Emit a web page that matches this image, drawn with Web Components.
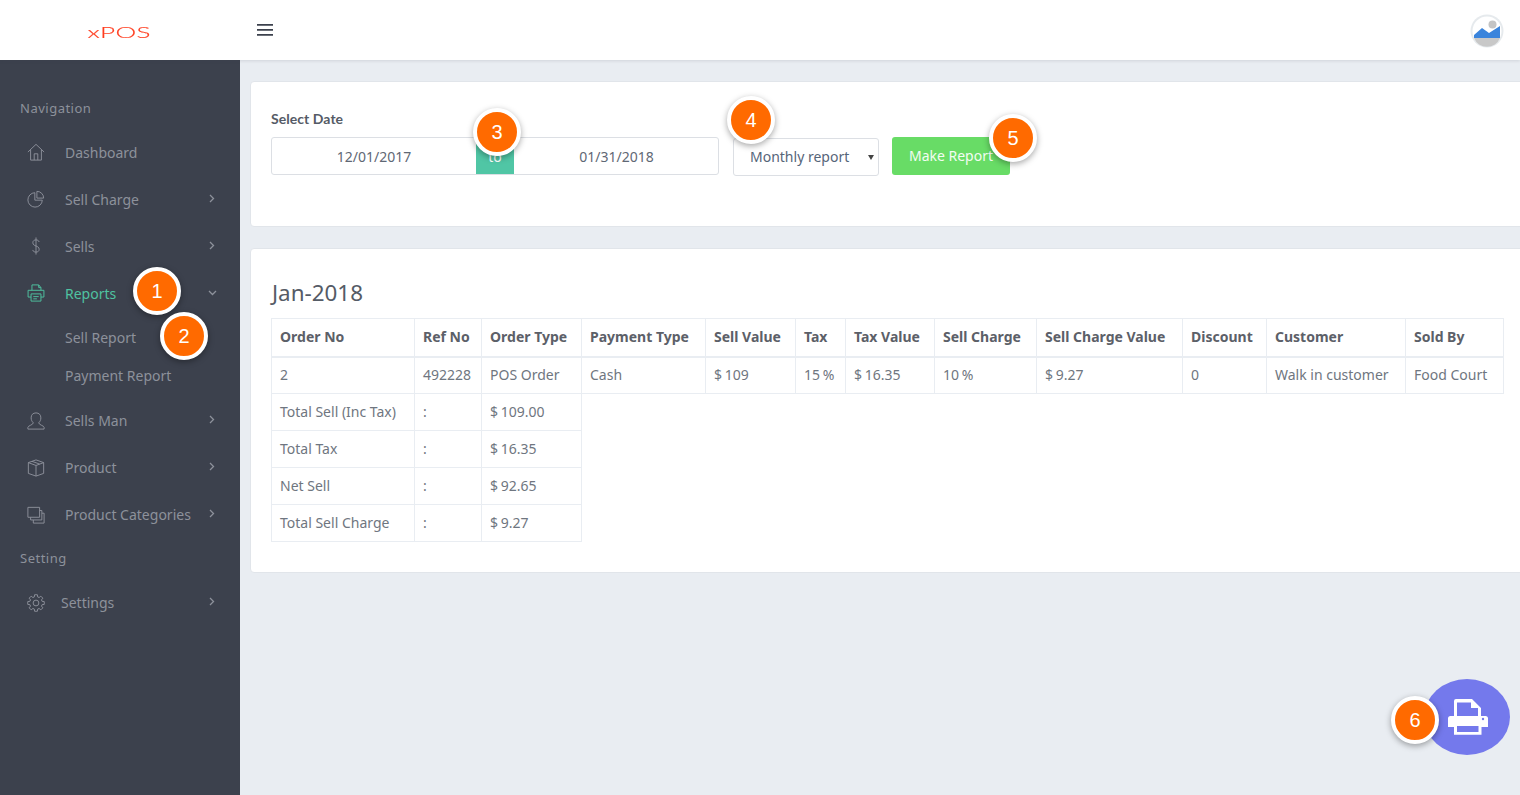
<!DOCTYPE html>
<html lang="en">
<head>
<meta charset="utf-8">
<title>xPOS</title>
<style>
  html, body { margin: 0; height: 100%; overflow: hidden; }
  body { font-family: "Noto Sans", "Liberation Sans", sans-serif; background: #e9edf2; }
</style>
</head>
<body>
<pos-app>
  <pos-header slot="header"></pos-header>
  <pos-sidebar slot="sidebar">
    <pos-nav-label style="margin-bottom:10.5px">Navigation</pos-nav-label>
    <pos-nav-item icon="home">Dashboard</pos-nav-item>
    <pos-nav-item icon="pie" arrow="right">Sell Charge</pos-nav-item>
    <pos-nav-item icon="dollar" arrow="right">Sells</pos-nav-item>
    <pos-nav-item icon="printer" arrow="down" active>Reports</pos-nav-item>
    <pos-nav-sub style="margin-top:2px">Sell Report</pos-nav-sub>
    <pos-nav-sub>Payment Report</pos-nav-sub>
    <pos-nav-item icon="user" arrow="right" style="margin-top:2.5px">Sells Man</pos-nav-item>
    <pos-nav-item icon="box" arrow="right">Product</pos-nav-item>
    <pos-nav-item icon="layers" arrow="right">Product Categories</pos-nav-item>
    <pos-nav-label style="margin:9.5px 0 11.5px">Setting</pos-nav-label>
    <pos-nav-item icon="gear" arrow="right" tight>Settings</pos-nav-item>
  </pos-sidebar>
  <pos-card style="height:146px">
    <report-form></report-form>
  </pos-card>
  <pos-card style="height:325px;margin-top:21px">
    <report-table></report-table>
  </pos-card>
  <print-fab slot="overlay"></print-fab>
  <step-badge slot="overlay" x="157" y="291">1</step-badge>
  <step-badge slot="overlay" x="184" y="336">2</step-badge>
  <step-badge slot="overlay" x="497" y="132">3</step-badge>
  <step-badge slot="overlay" x="751" y="120">4</step-badge>
  <step-badge slot="overlay" x="1013" y="138">5</step-badge>
  <step-badge slot="overlay" x="1415" y="720">6</step-badge>
</pos-app>

<script>
'use strict';

// gear outline, 8 teeth
function gearPath() {
  const pts = [];
  for (let i = 0; i < 8; i++) {
    const a = i * Math.PI / 4;
    [[-.27, 7], [-.17, 9.3], [.17, 9.3], [.27, 7]].forEach(([d, r]) => {
      pts.push((10 + r * Math.sin(a + d)).toFixed(2) + ' ' + (10 - r * Math.cos(a + d)).toFixed(2));
    });
  }
  return 'M' + pts.join('L') + 'z';
}

const ICONS = {
  home: '<path d="M1 10 10 1.500 19 10M4 7.500V19h12V7.500M8 19v-7h4v7"/>',
  pie: '<path d="M8.700 3a8 8 0 1 0 8.300 8.300H8.700z"/><path d="M11 1.500a7.500 7.500 0 0 1 7.500 7.500H11z"/>',
  dollar: '<path d="M13.500 5.500C13 3.900 11.700 3.200 10 3.200c-2 0-3.500 1.100-3.500 3.100 0 4.700 7 2.700 7 7.400 0 2-1.500 3.100-3.500 3.100-1.800 0-3.200-.8-3.700-2.400M10 .5v19"/>',
  printer: '<path d="M5.500 7V1h7.500l2.500 3V7M13 1v3h2.500M4.500 14.500h-3.300V7h17.600v7.500h-3.300"/><path d="M4.500 11h11v8h-11zM7 14h6M7 16.500h4"/>',
  user: '<path d="M1 19v-2c0-1.700 6-2.800 6-5-1.500-1.300-2.400-3.200-2.400-5.500C4.600 3 6.700 1 10 1s5.400 2 5.400 5.500c0 2.300-.9 4.200-2.400 5.500 0 2.200 6 3.300 6 5v2z"/>',
  box: '<path d="M10 1 18.500 4v12L10 19 1.500 16V4zM1.500 4l8.500 3.200L18.500 4M10 7.200V19M5.500 2.600l8.500 3"/>',
  layers: '<path d="M1 1.500h13v11H1z"/><path d="M14 5h2.500v10.500H4V12.500M16.500 8H19v11H7v-3.500"/>',
  gear: `<circle cx="10" cy="10" r="3.200"/><path d="${gearPath()}"/>`
};

class PosApp extends HTMLElement {
  constructor() {
    super();
    this.attachShadow({ mode: 'open' }).innerHTML = `
      <style>
        :host { display: grid; grid-template: 60px 1fr / 240px 1fr; height: 795px; overflow: hidden; position: relative; }
        .head { grid-column: 1 / -1; position: relative; z-index: 2; }
        main { padding: 21px 0 0 10px; margin-right: -12px; min-width: 0; }
      </style>
      <div class="head"><slot name="header"></slot></div>
      <slot name="sidebar"></slot>
      <main><slot></slot></main>
      <slot name="overlay"></slot>`;
  }
}

class PosHeader extends HTMLElement {
  constructor() {
    super();
    this.attachShadow({ mode: 'open' }).innerHTML = `
      <style>
        :host { display: flex; align-items: center; height: 60px; background: #fff; box-shadow: 0 1px 3px rgba(60,65,77,.14); }
        .brand { width: 240px; display: flex; justify-content: center; flex: none; padding-top: 5px; box-sizing: border-box; padding-right: 1px; }
        .logo { font: 300 15px/15px Lato, "Liberation Sans", sans-serif; color: #ff3d1f; display: inline-block; transform: scaleX(1.74); letter-spacing: .2px; -webkit-text-stroke: .15px #ff3d1f; }
        .menu { margin-left: 17px; width: 16px; height: 12px; display: block; margin-top: -1px; }
        .avatar { margin-left: auto; margin-right: 16px; width: 34px; height: 34px; margin-top: 1px; filter: blur(.4px); }
      </style>
      <div class="brand"><span class="logo">xPOS</span></div>
      <svg class="menu" viewBox="0 0 16 12" fill="#3c414d"><path d="M0 0h16v1.700H0zM0 5h16v1.700H0zM0 10h16v1.700H0z"/></svg>
      <svg class="avatar" viewBox="0 0 34 34">
        <circle cx="17" cy="17" r="16.500" fill="#e6eaed"/>
        <circle cx="17" cy="17" r="14.500" fill="#fff"/>
        <path d="M4 24V21l8-7 7 5 11-7v12z" fill="#3a84dc"/>
        <path d="M4 24h26a14 14 0 0 1-26 0z" fill="#c8c8c8"/>
        <circle cx="22.500" cy="10.500" r="4" fill="#c4c4c4"/>
      </svg>`;
  }
}

class PosSidebar extends HTMLElement {
  constructor() {
    super();
    this.attachShadow({ mode: 'open' }).innerHTML = `
      <style>
        :host { display: block; background: #3c414d; padding-top: 38px; }
      </style>
      <slot></slot>`;
  }
}

class PosNavLabel extends HTMLElement {
  constructor() {
    super();
    this.attachShadow({ mode: 'open' }).innerHTML = `
      <style>
        :host { display: block; height: 20px; line-height: 20px; padding-left: 20px; font-size: 13px; letter-spacing: .5px; color: #8d919b; }
      </style>
      <slot></slot>`;
  }
}

class PosNavItem extends HTMLElement {
  connectedCallback() {
    if (this.shadowRoot) return;
    const arrow = this.getAttribute('arrow');
    const chevron = arrow === 'down' ? 'M1 1l3.500 3.500L8 1' : 'M1 1l3.500 3.500L1 8';
    const size = arrow === 'down' ? 'width="9" height="6" viewBox="0 0 9 6"' : 'width="6" height="9" viewBox="0 0 6 9"';
    this.attachShadow({ mode: 'open' }).innerHTML = `
      <style>
        :host { display: flex; align-items: center; height: 47px; color: #8d919b; font-size: 14px; }
        :host([active]) { color: #4fc3a1; }
        .ico { width: 18px; height: 18px; margin-left: 27px; margin-right: 20px; flex: none; fill: none; stroke: currentColor; stroke-width: 1.050; stroke-linejoin: round; }
        :host([tight]) .ico { margin-right: 16px; }
        .arrow { position: absolute; left: ${arrow === 'down' ? 207.500 : 209}px; fill: none; stroke: #8d919b; stroke-width: 1.300; margin-top: ${arrow === 'down' ? -1 : -2}px; }
      </style>
      <svg class="ico" viewBox="0 0 20 20">${ICONS[this.getAttribute('icon')]}</svg>
      <span><slot></slot></span>
      ${arrow ? `<svg class="arrow" ${size}><path d="${chevron}"/></svg>` : ''}`;
  }
}

class PosNavSub extends HTMLElement {
  constructor() {
    super();
    this.attachShadow({ mode: 'open' }).innerHTML = `
      <style>
        :host { display: block; height: 38px; line-height: 38px; padding-left: 65px; font-size: 14px; color: #8d919b; }
      </style>
      <slot></slot>`;
  }
}

class PosCard extends HTMLElement {
  constructor() {
    super();
    this.attachShadow({ mode: 'open' }).innerHTML = `
      <style>
        :host { display: block; box-sizing: border-box; background: #fff; border: 1px solid #e1e5ea; border-radius: 4px; padding: 0 0 0 20px; }
      </style>
      <slot></slot>`;
  }
}

class ReportForm extends HTMLElement {
  constructor() {
    super();
    this.attachShadow({ mode: 'open' }).innerHTML = `
      <style>
        :host { display: grid; grid-template-columns: 448px 146px 118px; column-gap: 14px; padding-top: 26px; color: #5f6875; font-size: 14px; }
        label { grid-column: 1 / -1; font: 700 14px/21px Lato, "Noto Sans", sans-serif; color: #555b66; margin-bottom: 8px; letter-spacing: .05px; }
        .range { display: flex; height: 38px; box-sizing: border-box; border: 1px solid #dcdfe4; border-radius: 3px; }
        .date { width: 204px; flex: none; display: flex; align-items: center; justify-content: center; }
        .to + .date { flex: 1; width: auto; padding-left: 1px; }
        .to { width: 38px; flex: none; background: #50c6a5; color: #fff; display: flex; align-items: center; justify-content: center; }
        .select { height: 38px; margin-top: 1px; padding-bottom: 2px; box-sizing: border-box; border: 1px solid #dcdfe4; border-radius: 3px; display: flex; align-items: center; padding-left: 16px; position: relative; color: #566579; }
        .select::after { content: ""; position: absolute; right: 4px; top: 16px; border: 3.500px solid transparent; border-top: 5px solid #444; border-bottom: 0; }
        .btn { height: 38px; margin: 0 1px 0 -1px; padding-bottom: 2px; box-sizing: border-box; background: #68dc66; color: #f2fcf2; border-radius: 3px; display: flex; align-items: center; justify-content: center; }
      </style>
      <label>Select Date</label>
      <div class="range">
        <div class="date">12/01/2017</div>
        <div class="to">to</div>
        <div class="date">01/31/2018</div>
      </div>
      <div class="select">Monthly report</div>
      <div class="btn">Make Report</div>`;
  }
}

class ReportTable extends HTMLElement {
  constructor() {
    super();
    const widths = [143, 67, 100, 124, 90, 50, 89, 102, 146, 84, 139, 98];
    const heads = ['Order No', 'Ref No', 'Order Type', 'Payment Type', 'Sell Value', 'Tax', 'Tax Value', 'Sell Charge', 'Sell Charge Value', 'Discount', 'Customer', 'Sold By'];
    const row = ['2', '492228', 'POS Order', 'Cash', '$ 109', '15 %', '$ 16.35', '10 %', '$ 9.27', '0', 'Walk in customer', 'Food Court'];
    const totals = [['Total Sell (Inc Tax)', '$ 109.00'], ['Total Tax', '$ 16.35'], ['Net Sell', '$ 92.65'], ['Total Sell Charge', '$ 9.27']];
    const cell = c => `<td${/[$%]/.test(c) ? ' class="num"' : ''}>${c}</td>`;
    this.attachShadow({ mode: 'open' }).innerHTML = `
      <style>
        :host { display: block; color: #6f7680; font-size: 14px; }
        h2 { font-weight: 400; font-size: 22.400px; line-height: 30px; margin: 0 0 0 1px; padding-top: 29px; height: 40px; color: #555b66; }
        table { border-collapse: collapse; table-layout: fixed; width: 1233px; }
        th, td { border: 1px solid #e9edf2; height: 37px; box-sizing: border-box; padding: 0 8px 2px; text-align: left; white-space: nowrap; }
        th { font-weight: 700; color: #5c6068; border-bottom-width: 2px; height: 38px; }
        .num { word-spacing: -1px; }
        .empty { border: 0; }
      </style>
      <h2>Jan-2018</h2>
      <table>
        <colgroup>${widths.map(w => `<col style="width:${w}px">`).join('')}</colgroup>
        <thead><tr>${heads.map(h => `<th>${h}</th>`).join('')}</tr></thead>
        <tbody>
          <tr>${row.map(cell).join('')}</tr>
          ${totals.map(t => `<tr><td>${t[0]}</td><td>:</td>${cell(t[1])}<td class="empty" colspan="9"></td></tr>`).join('')}
        </tbody>
      </table>`;
  }
}

class PrintFab extends HTMLElement {
  constructor() {
    super();
    this.attachShadow({ mode: 'open' }).innerHTML = `
      <style>
        :host { position: absolute; left: 1424px; top: 679px; width: 86px; height: 76px; border-radius: 50%; background: #7479ec; display: flex; align-items: center; justify-content: center; }
        svg { width: 52px; height: 48px; margin-left: 2px; }
      </style>
      <svg viewBox="0 0 52 48" fill="#fff">
        <path fill-rule="evenodd" d="M14 6H30L39 15V23H43.500A2.500 2.500 0 0 1 46 25.500V34H39.500V41.700H12V34H6V25.500A2.500 2.500 0 0 1 8.500 23H12V8A2 2 0 0 1 14 6zM15 9.500V23H36V15H29V9.500zM15 33H36.500V39H15z"/>
        <circle cx="41" cy="26" r="1.200" fill="#7479ec"/>
      </svg>`;
  }
}

class StepBadge extends HTMLElement {
  constructor() {
    super();
    this.attachShadow({ mode: 'open' }).innerHTML = `
      <style>
        :host { position: absolute; z-index: 5; width: 48px; height: 48px; margin: -24px 0 0 -24px; box-sizing: border-box; border: 4px solid #fff; border-radius: 50%; background: #ff6a00; color: #fff; display: flex; align-items: center; justify-content: center; font: 20px "Liberation Sans", sans-serif; box-shadow: 0 2px 6px rgba(0,0,0,.35); }
      </style>
      <slot></slot>`;
  }
  connectedCallback() {
    this.style.left = this.getAttribute('x') + 'px';
    this.style.top = this.getAttribute('y') + 'px';
  }
}

customElements.define('pos-app', PosApp);
customElements.define('pos-header', PosHeader);
customElements.define('pos-sidebar', PosSidebar);
customElements.define('pos-nav-label', PosNavLabel);
customElements.define('pos-nav-item', PosNavItem);
customElements.define('pos-nav-sub', PosNavSub);
customElements.define('pos-card', PosCard);
customElements.define('report-form', ReportForm);
customElements.define('report-table', ReportTable);
customElements.define('print-fab', PrintFab);
customElements.define('step-badge', StepBadge);
</script>
</body>
</html>
